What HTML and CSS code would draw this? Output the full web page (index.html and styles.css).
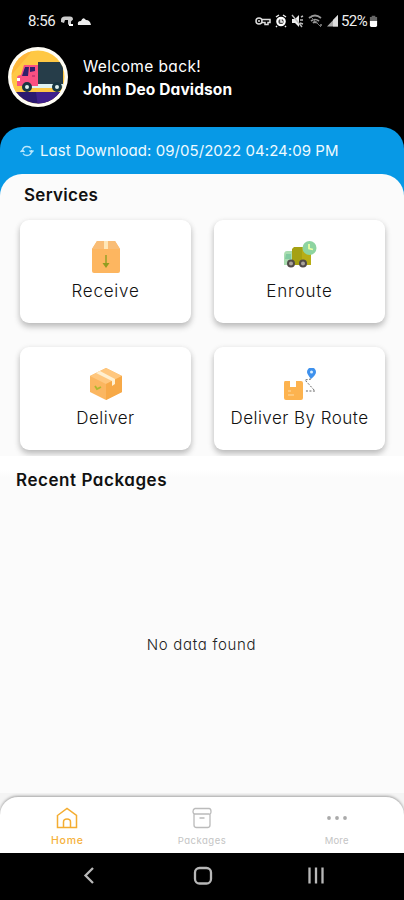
FILE: index.html
```html
<!DOCTYPE html>
<html lang="en">
<head>
<meta charset="utf-8">
<title>Home</title>
<link rel="stylesheet" href="styles.css">
</head>
<body>
<div class="app">
  <div class="status">
    <span class="time">8:56</span>
    <svg class="notif" viewBox="0 0 32 12" width="32" height="12">
      <path d="M1 7V5q0-3.500 4-3.500h5q3 0 3 3l-2 2v4l-3-1V5H5L4 8z" fill="#ccc"/><path d="M9 10h4" stroke="#fff" stroke-width="2"/>
      <path d="M18 10q-1-4 3-4 2-5 5-1 4 0 5 5z" fill="#eee"/>
    </svg>
    <div class="status-right">
      <svg viewBox="0 0 84 14" width="84" height="14">
        <g fill="none" stroke="#ddd" stroke-width="1.500"><circle cx="4" cy="7" r="3"/><path d="M7 5.500h8v3h-2v2h-3v-2H7M3 7h2"/></g>
        <circle cx="26" cy="7.500" r="3.700" fill="#444" stroke="#fff" stroke-width="2.200"/><path d="M21 3l3-2M31 3l-3-2M22 12l-1 1M30 12l1 1M26 5v3h2" stroke="#eee" stroke-width="1.500" fill="none"/>
        <path d="M37 5h3l4-4v12l-4-4h-3z" fill="#eee"/><path d="M37 1l10 12M46 3l2-1M45 6h3M45 9l3 1" stroke="#bbb" stroke-width="1.400"/>
        <path d="M54 4q6-5 12 0M56 7q4-3 8 0M58 9q2-2 4 0" stroke="#999" stroke-width="1.700" fill="none"/><path d="M55 2l11 11" stroke="#777"/><circle cx="66" cy="11" r="1" fill="#888"/>
        <path d="M72 12.500 83 1v11.500z" fill="#aaa"/><path d="M78 6l5-5v11.500h-5z" fill="#ddd"/>
      </svg>
      <span class="percent">52%</span>
      <svg viewBox="0 0 10 13" width="9" height="13"><path d="M3 0h4v1.500h2V7H1V1.500h2z" fill="#666"/><path d="M1 6h8v5q0 1.500-1.500 1.500h-5Q1 12.500 1 11z" fill="#fff"/></svg>
    </div>
  </div>
  <div class="profile">
    <svg class="avatar" viewBox="0 0 60 60" width="60" height="60">
      <defs><clipPath id="disc"><circle cx="30" cy="30" r="26.500"/></clipPath></defs>
      <circle cx="30" cy="30" r="30" fill="#fffdf5"/>
      <g clip-path="url(#disc)">
        <path fill="#ffc844" d="M0 0h60v60H0z"/><path d="M0 32 25 3l8-3H0z" fill="#ffb73a"/>
        <path d="M0 45h60v15H0z" fill="#2b1970"/><path d="M28 45h30v15H30z" fill="#40208c"/>
        <path d="M5 41h54v4H5z" fill="#ffc844"/><path d="M20 37h38v4H20z" fill="#dff3f2"/>
        <path d="M30 15h25v22H30z" fill="#263d49"/>
        <path d="M16 18h14v21H9V31q0-3 4-3z" fill="#fa5082"/>
        <path d="M17 20h4l-1 9h-6zM22 20h5v4l-5 1z" fill="#31206a"/><path d="M24 29h3" stroke="#a72267"/>
        <path d="M9 31h3v3H9z" fill="#fff"/>
        <g fill="#dff0ef" stroke="#183742" stroke-width="3"><circle cx="19" cy="40" r="3.500"/><circle cx="49" cy="40" r="3.500"/></g>
      </g>
    </svg>
    <div class="greeting"><div><span class="welcome">Welcome back!</span></div><div><span class="name">John Deo Davidson</span></div></div>
  </div>
  <main class="sheet">
    <div class="download">
      <svg viewBox="0 0 14 12" width="14" height="12" fill="none" stroke="#b9e6fc" stroke-width="1.400"><path d="M2.500 7V5.500Q3 1.500 7 1.500q3 0 4 2M11.500 5v1.500Q11 10.500 7 10.500q-3 0-4-2M.5 7l2-2 2 2M9.500 5.500l2 2 2-2"/></svg>
      <span>Last Download: 09/05/2022 04:24:09 PM</span>
    </div>
    <div class="panel">
      <section class="services">
        <h2><span class="services-title">Services</span></h2>
        <div class="grid">
          <div class="card">
            <svg viewBox="0 0 28 32" width="28" height="32"><path d="M5 0h18l5 8v22q0 2-2 2H2q-2 0-2-2V8z" fill="#fdb660"/><path d="M5 0h18l5 8H0z" fill="#f9bd76"/><path d="M12 0h4v8h-4z" fill="#ffe7b7"/><path d="M14 14v10" stroke="#9ca32b" stroke-width="1.600"/><path d="M10.500 22h7L14 27z" fill="#929d20"/></svg>
            <span class="t-receive">Receive</span>
          </div>
          <div class="card">
            <svg viewBox="0 0 34 32" width="34" height="32"><path d="M4 10h6v14H1V14q0-4 3-4z" fill="#a9ddb0"/><path d="M3 13h5v5H2z" fill="#82cba1"/><path d="M11 6h14l3 4v14H9V8z" fill="#a5a112"/><path d="M19 6h6l3 4v14h-9z" fill="#b7ad16"/><g fill="#aaa49d" stroke="#514a49" stroke-width="2"><circle cx="8" cy="22.500" r="3"/><circle cx="20" cy="22.500" r="3"/></g><circle cx="26.500" cy="7" r="7" fill="#8dd4a0"/><path d="M26 3v4.500l4 1" stroke="#e9ffa4" stroke-width="1.800" fill="none"/></svg>
            <span class="t-enroute">Enroute</span>
          </div>
          <div class="card">
            <svg viewBox="0 0 32 32" width="32" height="32"><path d="M0 8 16 0l16 8v16L16 32 0 24z" fill="#fbb660"/><path d="M0 8 16 0l16 8-16 8z" fill="#ffc77e"/><path d="M16 16l16-8v16l-16 8z" fill="#f7a947"/><path d="M6 5l4-2 15 8v5l-3 2v-5z" fill="#fff0d1"/><path d="M5 18l2 3 4-2" stroke="#aeb72e" stroke-width="1.800" fill="none"/></svg>
            <span class="t-deliver">Deliver</span>
          </div>
          <div class="card">
            <svg viewBox="0 0 34 32" width="34" height="32"><path d="M2 13h5v6h6v-6h5q2 0 2 2v15q0 2-2 2H3q-2 0-2-2V15q0-2 1-2z" fill="#fdb34f"/><path d="M5 23h3M5 27h6" stroke="#ffdca6"/><path d="M28 11q-4-5-4-7a4 4 0 0 1 9 0q0 3-5 7z" fill="#3e91ed"/><circle cx="28.500" cy="4" r="1.500" fill="#d9eeff"/><path d="M28 11l-6 1 10 11h-10" fill="none" stroke="#666" stroke-width="1" stroke-dasharray="2 1.500"/></svg>
            <span class="t-route">Deliver By Route</span>
          </div>
        </div>
      </section>
      <section class="recent">
        <h2><span class="recent-title">Recent Packages</span></h2>
        <div class="empty"><span>No data found</span></div>
      </section>
    </div>
  </main>
  <nav class="tabs">
    <div class="tab active">
      <svg viewBox="0 0 22 22" width="22" height="22" fill="none" stroke="#f4ad31" stroke-width="1.500"><path d="M1.500 8.500 11 1.500l9.500 7v12h-19zM7.500 20v-5q0-3 3.500-3t3.500 3v5"/></svg>
      <span class="t-home">Home</span>
    </div>
    <div class="tab">
      <svg viewBox="0 0 22 22" width="22" height="22" fill="none" stroke="#bbb" stroke-width="1.300"><path d="M4 1.500h14q2 0 2 3t-2 2.500H4Q2 7 2 4.500t2-3zM3 7v11q0 2.500 2.500 2.500h11Q19 20.500 19 18V7M8.500 11h5"/></svg>
      <span class="t-packages">Packages</span>
    </div>
    <div class="tab">
      <svg viewBox="0 0 22 22" width="22" height="22" fill="#aaa"><circle cx="3" cy="11" r="1.900"/><circle cx="11" cy="11" r="1.900"/><circle cx="19" cy="11" r="1.900"/></svg>
      <span class="t-more">More</span>
    </div>
  </nav>
  <div class="system">
    <svg viewBox="0 0 20 20" width="20" height="20"><path d="M14 2 6.500 9.500 14 17"/></svg>
    <svg viewBox="0 0 20 20" width="20" height="20"><rect x="2" y="2" width="16" height="15.500" rx="4.500"/></svg>
    <svg viewBox="0 0 20 20" width="20" height="20"><path d="M3.500 1.500v16M10 1.500v16M16.500 1.500v16"/></svg>
  </div>
</div>
</body>
</html>
```
FILE: styles.css
```css
* { box-sizing: border-box; }
body { margin: 0; background: #000; font-family: Inter, "Open Sans", sans-serif; font-feature-settings: "cv11", "ss03"; color: #111; }
svg { display: block; flex: none; }
span { white-space: nowrap; }
h2 { margin: 0; font-size: 17px; font-weight: 600; line-height: 24px; }
.app { width: 404px; height: 900px; display: flex; flex-direction: column; overflow: hidden; background: #000; }
.status { height: 46px; padding: 8px 26px 12px 28px; display: flex; align-items: center; color: #eee; font-family: Roboto, sans-serif; font-size: 15px; }
.time { width: 28px; letter-spacing: -.4px; }
.notif { margin-left: 4px; }
.status-right { margin-left: auto; display: flex; align-items: center; }
.percent { width: 28px; margin: 0 0 0 2px; letter-spacing: -.6px; }
.profile { height: 81px; padding: 1px 8px; display: flex; color: #fff; }
.greeting { margin-left: 15px; padding-top: 8px; font-size: 15.500px; line-height: 23px; }
.welcome { letter-spacing: .38px; }
.name { font-weight: 700; letter-spacing: .12px; }
.sheet { height: 670px; flex: none; background: #0799e6; border-radius: 22px 22px 0 0; display: flex; flex-direction: column; }
.download { height: 47px; flex: none; padding: 0 20px; display: flex; align-items: center; gap: 6px; color: #eefaff; font-size: 15px; letter-spacing: .05px; }
.panel { flex: 1; background: #fbfbfb; border-radius: 22px 22px 0 0; overflow: hidden; }
.services { height: 282px; padding: 9px 19px 0 20px; overflow: hidden; }
.services h2 { padding-left: 4px; }
.services-title { letter-spacing: .28px; }
.recent-title { letter-spacing: .55px; }
.grid { margin-top: 13px; display: grid; grid-template-columns: 171px 171px; grid-auto-rows: 103px; gap: 24px 23px; }
.card { background: #fff; border-radius: 9px; box-shadow: 0 4px 6px rgba(0,0,0,.22), 0 1px 6px rgba(0,0,0,.08); display: flex; flex-direction: column; align-items: center; padding-top: 21px; font-size: 17px; font-weight: 300; line-height: 24px; gap: 6px; }
.t-receive { letter-spacing: .75px; }
.t-enroute { letter-spacing: .8px; }
.t-deliver, .t-route { letter-spacing: .47px; }
.recent { height: 341px; padding: 12px 17px 0 16px; background: linear-gradient(#fff 0 13px, #fbfbfb 21px); }
.empty { display: flex; justify-content: center; margin-top: 143px; font-size: 15px; font-weight: 300; line-height: 20px; color: #222; letter-spacing: .7px; }
.tabs { height: 56px; flex: none; display: grid; grid-template-columns: repeat(3, 1fr); background: #fff; border-radius: 18px 18px 0 0; box-shadow: 0 -1px 3px rgba(0,0,0,.35), 0 -18px 0 18px #f4f4f4; position: relative; clip-path: inset(-4px 0 0 0); }
.tab { display: flex; flex-direction: column; align-items: center; padding-top: 10px; gap: 5px; color: #c4c4c4; font-size: 9.500px; line-height: 13px; }
.tab.active { color: #f5b13b; font-weight: 500; font-size: 10.500px; }
.t-home { letter-spacing: .7px; }
.t-packages { letter-spacing: .5px; }
.t-more { letter-spacing: .2px; }
.system { height: 47px; flex: none; display: flex; justify-content: space-between; padding: 13px 78px 0 79px; }
.system svg { fill: none; stroke: #b8b8b8; stroke-width: 2.300; }
```
